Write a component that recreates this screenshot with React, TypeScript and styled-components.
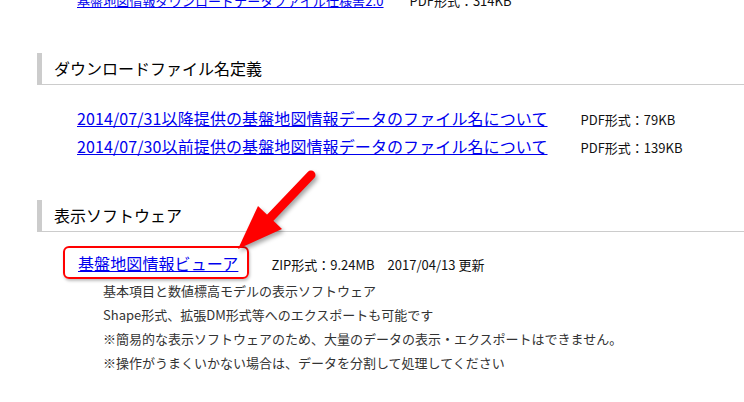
import React from "react";
import styled, {createGlobalStyle} from "styled-components";

const GlobalStyle = createGlobalStyle`
	html, body {
		margin: 0;
		padding: 0;
		background: #fff;
	}

	body {
		font-family: "Noto Sans CJK JP", "Noto Sans", sans-serif;
		color: #222;
		overflow: hidden;
	}
`;

type FileRow = {
	title: string;
	size: string;
};

const fileNameDocs: FileRow[] = [
	{title: "2014/07/31以降提供の基盤地図情報データのファイル名について", size: "PDF形式：79KB"},
	{title: "2014/07/30以前提供の基盤地図情報データのファイル名について", size: "PDF形式：139KB"},
];

const viewerNotes = [
	"基本項目と数値標高モデルの表示ソフトウェア",
	"Shape形式、拡張DM形式等へのエクスポートも可能です",
	"※簡易的な表示ソフトウェアのため、大量のデータの表示・エクスポートはできません。",
	"※操作がうまくいかない場合は、データを分割して処理してください",
];

const App: React.FC = () => {
	return (
		<Page>
			<GlobalStyle />
			<TopRow>
				<SmallLink href="#">基盤地図情報ダウンロードデータファイル仕様書2.0</SmallLink>
				<Size $gap={26}>PDF形式：314KB</Size>
			</TopRow>

			<Section $top={42}>
				<Heading>ダウンロードファイル名定義</Heading>
				<FileList>
					{fileNameDocs.map(doc => (
						<FileItem key={doc.title}>
							<DocLink href="#">{doc.title}</DocLink>
							<Size $gap={33}>{doc.size}</Size>
						</FileItem>
					))}
				</FileList>
			</Section>

			<Section $top={39}>
				<Heading>表示ソフトウェア</Heading>
				<ViewerRow>
					<Highlight>
						<DocLink href="#">基盤地図情報ビューア</DocLink>
					</Highlight>
					<Meta>ZIP形式：9.24MB　2017/04/13 更新</Meta>
				</ViewerRow>
				<Notes>
					{viewerNotes.map(note => (
						<Note key={note}>{note}</Note>
					))}
				</Notes>
			</Section>

			<Arrow width="110" height="95" viewBox="0 0 110 95">
				<line x1="86" y1="10" x2="44" y2="54" stroke="#ff0000" strokeWidth="9" strokeLinecap="round" />
				<polygon points="13,84 33,41 57,64" fill="#ff0000" />
			</Arrow>
		</Page>
	);
};

const Page = styled.div`
	position: relative;
	display: flow-root;
	width: 744px;
	height: 402px;
	padding-left: 37px;
	box-sizing: border-box;
	overflow: hidden;
`;

const TopRow = styled.div`
	margin-top: -9px;
	padding-left: 40px;
	display: flex;
	align-items: baseline;
	font-size: 13px;
	line-height: 20px;
`;

const SmallLink = styled.a`
	color: #0000ee;
	text-decoration: underline;
	letter-spacing: 0.1px;
`;

const Size = styled.span<{$gap: number}>`
	margin-left: ${props => props.$gap}px;
	font-size: 13px;
	color: #111;
	white-space: nowrap;
`;

const Section = styled.section<{$top: number}>`
	margin-top: ${props => props.$top}px;
`;

const Heading = styled.h2`
	margin: 0;
	padding-left: 12px;
	border-left: 5px solid #cccccc;
	border-bottom: 1px solid #cccccc;
	font-size: 16px;
	line-height: 31px;
	font-weight: normal;
	color: #000;
`;

const FileList = styled.ul`
	list-style: none;
	margin: 20px 0 0;
	padding: 0 0 0 40px;
`;

const FileItem = styled.li`
	display: flex;
	align-items: baseline;
	line-height: 27px;
`;

const DocLink = styled.a`
	font-size: 16px;
	color: #0000ee;
	text-decoration: underline;
	white-space: nowrap;
	letter-spacing: 0.1px;
`;

const ViewerRow = styled.div`
	margin-top: 14px;
	padding-left: 26px;
	display: flex;
	align-items: baseline;
`;

const Highlight = styled.span`
	display: inline-block;
	padding: 2px 9px 1px 13px;
	line-height: 26px;
	border: 2px solid #ff0000;
	border-radius: 6px;
	box-shadow: 1px 2px 3px rgba(0, 0, 0, 0.25);
`;

const Meta = styled.span`
	margin-left: 22px;
	font-size: 13px;
	color: #111;
`;

const Notes = styled.div`
	padding-left: 66px;
`;

const Note = styled.p`
	margin: 0;
	font-size: 13px;
	line-height: 24px;
	color: #333;
`;

const Arrow = styled.svg`
	position: absolute;
	left: 225px;
	top: 165px;
	filter: drop-shadow(2px 3px 2px rgba(0, 0, 0, 0.35));
	pointer-events: none;
`;

export default App;
